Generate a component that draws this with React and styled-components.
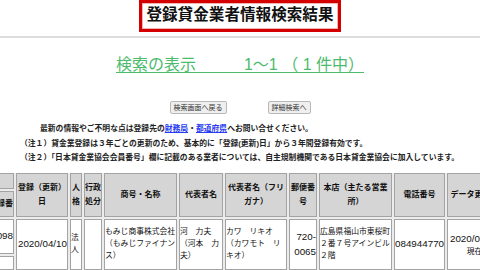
import styled, { createGlobalStyle } from "styled-components"

const GlobalStyle = createGlobalStyle`
  html, body {
    margin: 0;
    padding: 0;
    background: #fff;
    overflow: hidden;
  }
  body {
    font-family: "Liberation Sans", "Noto Sans CJK JP", sans-serif;
    color: #111;
  }
`

const headers = [
  "登録（更新）日",
  "人格",
  "行政処分",
  "商号・名称",
  "代表者名",
  "代表者名（フリガナ）",
  "郵便番号",
  "本店（主たる営業所）",
  "電話番号",
  "データ更新日",
]

const widths = [50, 52, 12, 18, 73, 44, 62, 28, 73, 51, 55]

export default function App() {
  return (
    <Page>
      <GlobalStyle />
      <TitleBar>
        <Title>登録貸金業者情報検索結果</Title>
      </TitleBar>

      <ResultLink href="#">検索の表示　　　1〜1 （ 1 件中）</ResultLink>

      <ButtonRow>
        <Button>検索画面へ戻る</Button>
        <Button>詳細検索へ</Button>
      </ButtonRow>

      <Notes>
        <Line indent>
          最新の情報やご不明な点は登録先の<a href="#">財務局</a>・<a href="#">都道府県</a>へお問い合せください。
        </Line>
        <Line>（注１）貸金業登録は３年ごとの更新のため、基本的に「登録(更新)日」から３年間登録有効です。</Line>
        <Line>（注２）「日本貸金業協会会員番号」欄に記載のある業者については、自主規制機関である日本貸金業協会に加入しています。</Line>
      </Notes>

      <TableWrap>
        <Table>
          <colgroup>
            {widths.map((w, i) => <col key={i} style={{ width: w }} />)}
          </colgroup>
          <tbody>
            <tr>
              <Head $h={16}></Head>
              {headers.map((h) => <Head key={h} rowSpan={2}>{h}</Head>)}
            </tr>
            <tr>
              <Head $h={26} $align="right">登録番</Head>
            </tr>
            <tr>
              <Cell $h={35} $align="right"><Num>00098</Num></Cell>
              <Cell rowSpan={2} $align="right"><Num>2020/04/10</Num></Cell>
              <Cell rowSpan={2}>法人</Cell>
              <Cell rowSpan={2}></Cell>
              <Cell rowSpan={2}>もみじ商事株式会社（もみじファイナンス）</Cell>
              <Cell rowSpan={2}>河　力夫（河本　力夫）</Cell>
              <Cell rowSpan={2}>カワ　リキオ（カワモト　リキオ）</Cell>
              <Cell rowSpan={2} $align="right"><Num $lh={15}>720-0065</Num></Cell>
              <Cell rowSpan={2}>広島県福山市東桜町２番７号アインビル２階</Cell>
              <Cell rowSpan={2}><Num>0849447700</Num></Cell>
              <Cell rowSpan={2} $align="center"><Num $lh={15}>2020/04/10</Num> 現在</Cell>
            </tr>
            <tr>
              <Cell $h={14}></Cell>
            </tr>
          </tbody>
        </Table>
      </TableWrap>
    </Page>
  )
}

const Page = styled.div`
  width: 480px;
  height: 270px;
  overflow: hidden;
`
const TitleBar = styled.header`
  text-align: center;
  border-bottom: 2px solid #dcdcdc;
  padding-bottom: 4px;
`
const Title = styled.h1`
  display: inline-block;
  margin: 0;
  padding: 2px 4px 4px;
  font-size: 15.6px;
  line-height: 20px;
  font-weight: 700;
  color: #111;
  border: 3px solid #d40000;
  box-shadow: inset 0 0 0 1px #f3b4b4;
`
const ResultLink = styled.a`
  display: block;
  width: max-content;
  margin: 17px auto 0;
  font-size: 16px;
  line-height: 20px;
  color: #4cbb6c;
  text-decoration: underline;
  text-underline-offset: 2px;
`
const ButtonRow = styled.div`
  display: flex;
  justify-content: center;
  gap: 41px;
  margin-top: 26px;
`
const Button = styled.button`
  font-family: "Liberation Sans", "Noto Sans CJK JP", sans-serif;
  font-size: 7px;
  line-height: 9px;
  padding: 1px 3px;
  color: #333;
  background: #efefef;
  border: 1px solid #b8b8b8;
  border-radius: 2px;
`
const Notes = styled.div`
  margin-top: 8px;
  padding-left: 20px;
  font-size: 7.8px;
  line-height: 14.5px;
  font-weight: 700;
  color: #222;
  white-space: nowrap;
  a {
    color: #2a3cf0;
    text-decoration: underline;
  }
`
const Line = styled.div`
  text-indent: ${(props) => (props.indent ? "20px" : "0")};
`
const TableWrap = styled.div`
  margin-top: 7px;
  overflow: hidden;
`
const Table = styled.table`
  table-layout: fixed;
  width: 542px;
  margin-left: -38px;
  border-collapse: separate;
  border-spacing: 2px 2px;
  margin-top: -2px;
  background: #ececec;
`
const Head = styled.th`
  box-sizing: border-box;
  height: ${(props) => (props.$h ? props.$h + "px" : "auto")};
  padding: 0;
  font-size: 8px;
  line-height: 14px;
  font-weight: 700;
  text-align: ${(props) => props.$align || "center"};
  vertical-align: middle;
  background: #d5d5d5;
  border: 1px solid #a3a3a3;
  overflow: hidden;
`
const Cell = styled.td`
  box-sizing: border-box;
  height: ${(props) => (props.$h ? props.$h + "px" : "auto")};
  padding: 0;
  font-size: 7.8px;
  line-height: 12px;
  text-align: ${(props) => props.$align || "left"};
  vertical-align: middle;
  background: #fff;
  border: 1px solid #a3a3a3;
  overflow: hidden;
`
const Num = styled.span`
  font-size: 9.8px;
  line-height: ${(props) => (props.$lh ? props.$lh + "px" : "12px")};
`
